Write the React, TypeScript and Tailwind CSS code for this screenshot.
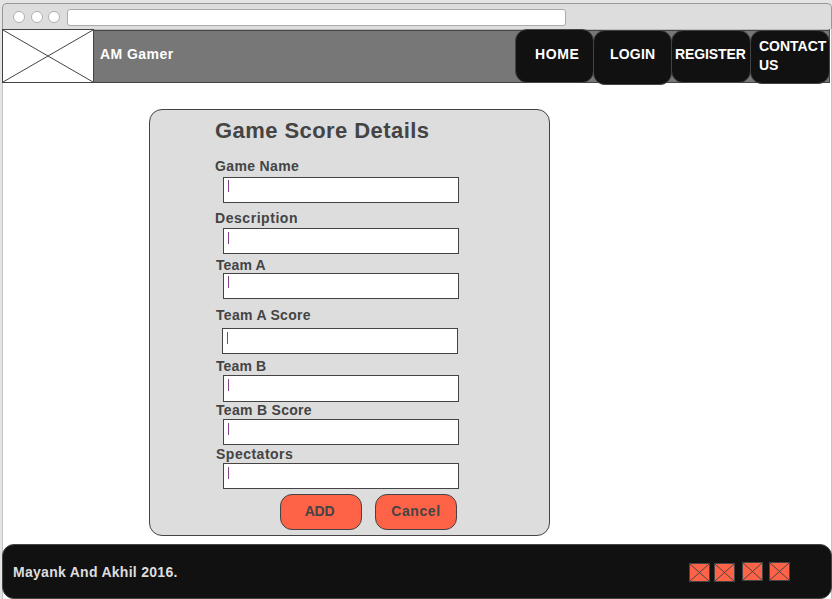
const navItems = [
  { label: 'HOME', box: 'w-[79px] h-[54px] pl-[19px] pt-[15px]', text: 'tracking-[0.6px]' },
  { label: 'LOGIN', box: '-ml-px mt-px w-[79px] h-[55px] pl-[16px] pt-[14px]', text: 'tracking-[0.2px]' },
  { label: 'REGISTER', box: '-ml-px mt-px w-[80px] h-[53px] pl-[3px] pt-[14px]', text: 'tracking-[-0.1px]' },
  { label: 'CONTACT US', box: '-ml-px mt-px w-[80px] h-[54px] pl-[8px] pt-[6px]', text: 'w-[70px] tracking-[0px]' },
];

const fields = [
  { label: 'Game Name', gap: 'mt-[15px]', indent: 'pl-2', text: 'tracking-[0.35px]', input: 'mt-[3px] h-[26px] pt-[2px]', caret: 'bg-[#83438a]' },
  { label: 'Description', gap: 'mt-[7px]', indent: 'pl-2', text: 'tracking-[0.55px]', input: 'mt-[2px] h-[26px] pt-[3px]', caret: 'bg-[#83438a]' },
  { label: 'Team A', gap: 'mt-[3px] ml-px', indent: 'pl-[7px]', text: 'tracking-[0.1px]', input: 'h-[26px] pt-[2px]', caret: 'bg-[#83438a]' },
  { label: 'Team A Score', gap: 'mt-2 ml-px', indent: 'pl-[6px]', text: 'tracking-[0.3px]', input: 'mt-[5px] h-[26px] pt-[3px]', caret: 'bg-[#3c7a3c]' },
  { label: 'Team B', gap: 'mt-1 ml-px', indent: 'pl-[7px]', text: 'tracking-[0.1px]', input: 'mt-px h-[27px] pt-[3px]', caret: 'bg-[#83438a]' },
  { label: 'Team B Score', gap: 'ml-px', indent: 'pl-[7px]', text: 'tracking-[0.3px]', input: 'mt-px h-[26px] pt-[3px]', caret: 'bg-[#83438a]' },
  { label: 'Spectators', gap: 'mt-px ml-px', indent: 'pl-[7px]', text: 'tracking-[0.5px]', input: 'mt-px h-[26px] pt-[3px]', caret: 'bg-[#83438a]' },
];

const socialGaps = ['mt-px', 'mt-px ml-1', 'ml-[7px]', 'ml-[6px]'];

function Cross({ w, h }: { w: number; h: number }) {
  return (
    <svg className="block" width={w} height={h} viewBox={`0 0 ${w} ${h}`}>
      <path d={`M0 0 L${w} ${h} M${w} 0 L0 ${h}`} stroke="#444" strokeWidth="1" fill="none" />
    </svg>
  );
}

export default function App() {
  return (
    <div className="flex h-[599px] w-[832px] flex-col overflow-hidden bg-[#e4e4e4] pl-[2px] pt-[3px] font-['Liberation_Sans',Arial,sans-serif] text-[14px] font-bold leading-4">
      <div className="flex h-[26px] w-[830px] shrink-0 rounded-t-[5px] border border-b-0 border-[#999] bg-[#ddd] pl-[10px] pt-[5px]">
        <div className="mt-[2px] flex gap-[5.5px]">
          <i className="size-3 rounded-full border border-[#b0b0b0] bg-white" />
          <i className="size-3 rounded-full border border-[#b0b0b0] bg-white" />
          <i className="size-3 rounded-full border border-[#b0b0b0] bg-white" />
        </div>
        <div className="ml-[7px] h-[17px] w-[499px] rounded-[3px] border border-[#aaa] bg-white" />
      </div>
      <div className="flex w-[830px] grow flex-col border-x border-[#c4c4c4] bg-white">
        <header className="-ml-px flex h-[54px] w-[828px] shrink-0 bg-[linear-gradient(#bbb_1px,#444_1px,#444_2px,#777_2px,#777_53px,#444_53px)]">
          <div className="h-[54px] w-[92px] shrink-0 border border-[#444] bg-white">
            <Cross w={90} h={52} />
          </div>
          <div className="ml-[6px] mt-[17px] w-[415px] shrink-0 tracking-[0.45px] text-white">AM Gamer</div>
          <nav className="flex shrink-0 text-white">
            {navItems.map((n) => (
              <a key={n.label} className={`shrink-0 rounded-[12px] border border-[#444] bg-[#111] leading-[19px] ${n.box}`}>
                <span className={`block ${n.text}`}>{n.label}</span>
              </a>
            ))}
          </nav>
          <div className="-ml-px w-px shrink-0 bg-[#444]" />
        </header>
        <main className="ml-[146px] mt-[26px] h-[427px] w-[401px] shrink-0 rounded-[13px] border border-[#444] bg-[#ddd] pl-[65px] pt-[9px] text-[#444]">
          <h1 className="whitespace-nowrap text-[22px] leading-6 tracking-[0.43px]">Game Score Details</h1>
          {fields.map((f) => (
            <div key={f.label} className={f.gap}>
              <label className={`block ${f.text}`}>{f.label}</label>
              <div className={f.indent}>
                <div className={`w-[236px] border border-[#444] bg-white pl-1 ${f.input}`}>
                  <div className={`h-3 w-px ${f.caret}`} />
                </div>
              </div>
            </div>
          ))}
          <div className="ml-[65px] mt-[5px] flex gap-[13px]">
            <button className="h-9 w-[82px] rounded-[12px] border border-[#444] bg-[#ff6347] pb-[2px] pr-[3px] tracking-[-0.2px]">ADD</button>
            <button className="h-9 w-[82px] rounded-[12px] border border-[#444] bg-[#ff6347] pb-[2px] tracking-[0.6px]">Cancel</button>
          </div>
        </main>
        <footer className="-ml-px mt-2 flex h-[55px] w-[830px] shrink-0 rounded-[12px] border border-[#444] bg-[#111] text-[#ddd]">
          <div className="ml-[10px] mt-[19px] w-[676px] tracking-[0.28px]">Mayank And Akhil 2016.</div>
          <div className="mt-[17px] flex">
            {socialGaps.map((g, i) => (
              <div key={i} className={`h-[19px] w-[21px] border border-[#444] bg-[#ff6347] ${g}`}>
                <Cross w={19} h={17} />
              </div>
            ))}
          </div>
        </footer>
      </div>
    </div>
  );
}
